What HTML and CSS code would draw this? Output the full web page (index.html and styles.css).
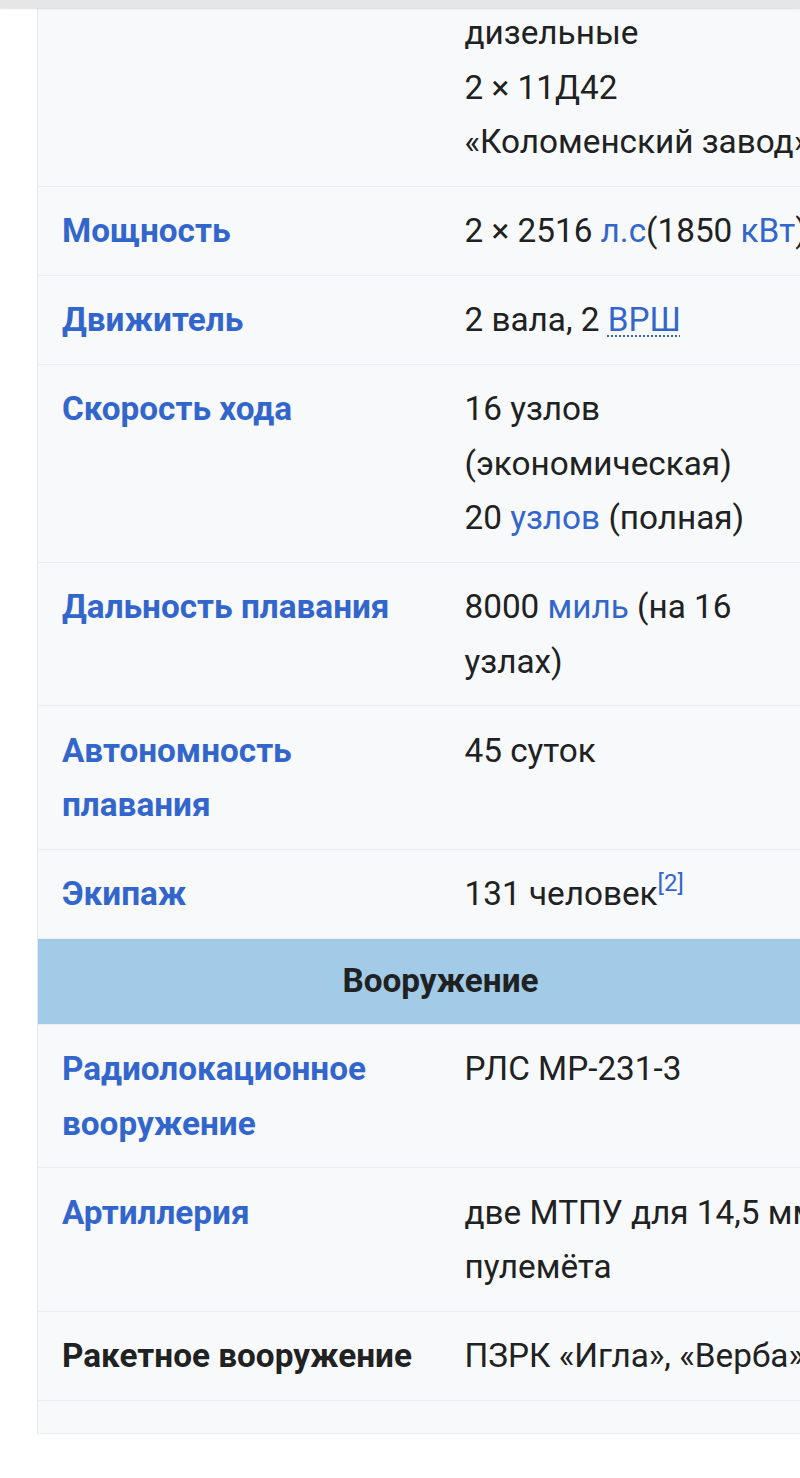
FILE: index.html
```html
<!DOCTYPE html>
<html lang="ru">
<head>
<meta charset="utf-8">
<title>Infobox</title>
<link rel="stylesheet" href="styles.css">
</head>
<body>
<div class="topbar"></div>
<div class="page">
  <table class="infobox">
    <tbody>
      <tr class="first">
        <th class="label"></th>
        <td class="value">дизельные<br>2 × 11Д42<br>«Коломенский завод»</td>
      </tr>
      <tr>
        <th class="label"><a class="link">Мощность</a></th>
        <td class="value">2 × 2516 <a class="link">л.с</a>(1850 <a class="link">кВт</a>)</td>
      </tr>
      <tr>
        <th class="label"><a class="link">Движитель</a></th>
        <td class="value">2 вала, 2 <abbr class="abbr">ВРШ</abbr></td>
      </tr>
      <tr>
        <th class="label"><a class="link">Скорость хода</a></th>
        <td class="value">16 узлов<br>(экономическая)<br>20 <a class="link">узлов</a> (полная)</td>
      </tr>
      <tr>
        <th class="label"><a class="link">Дальность плавания</a></th>
        <td class="value">8000 <a class="link">миль</a> (на 16<br>узлах)</td>
      </tr>
      <tr>
        <th class="label"><a class="link">Автономность<br>плавания</a></th>
        <td class="value">45 суток</td>
      </tr>
      <tr>
        <th class="label"><a class="link">Экипаж</a></th>
        <td class="value">131 человек<sup class="ref">[2]</sup></td>
      </tr>
      <tr class="section">
        <th colspan="2" class="section-title">Вооружение</th>
      </tr>
      <tr>
        <th class="label"><a class="link">Радиолокационное<br>вооружение</a></th>
        <td class="value">РЛС МР-231-3</td>
      </tr>
      <tr>
        <th class="label"><a class="link">Артиллерия</a></th>
        <td class="value">две МТПУ для 14,5 мм<br>пулемёта</td>
      </tr>
      <tr>
        <th class="label plain">Ракетное вооружение</th>
        <td class="value">ПЗРК «Игла», «Верба»</td>
      </tr>
      <tr class="empty">
        <td colspan="2"></td>
      </tr>
    </tbody>
  </table>
</div>
</body>
</html>
```

FILE: styles.css
```css
html, body {
  margin: 0;
  padding: 0;
  background: #ffffff;
  overflow-x: hidden;
}

body {
  font-family: Roboto, "Noto Sans", "Liberation Sans", sans-serif;
  color: #202122;
  font-size: 33.3px;
  line-height: 54.5px;
}

.topbar {
  position: fixed;
  top: 0;
  left: 0;
  right: 0;
  height: 8px;
  background: #e6e6e7;
  box-shadow: 0 1px 2px rgba(0, 0, 0, 0.12);
  z-index: 2;
}

.page {
  padding-left: 37px;
  padding-bottom: 44px;
}

.infobox {
  width: 806px;
  border-collapse: collapse;
  background: #f8f9fa;
  border-left: 1px solid #e6e8eb;
  border-bottom: 1px solid #e6e8eb;
  table-layout: fixed;
}

.infobox tr {
  border-bottom: 1px solid #eaecf0;
}

.label,
.value {
  vertical-align: top;
  text-align: left;
  padding: 17.5px 0 16px 24px;
  white-space: nowrap;
  width: 50%;
}

.label {
  font-weight: 700;
}

.first .label,
.first .value {
  padding-top: 6px;
}

.link {
  color: #3366cc;
  text-decoration: none;
}

.label.plain {
  color: #202122;
}

.abbr {
  color: #3366cc;
  text-decoration-line: underline;
  text-decoration-style: dotted;
  text-decoration-thickness: 2px;
  text-underline-offset: 4px;
  text-decoration-color: #3366cc;
}

.ref {
  color: #3366cc;
  font-size: 24px;
  line-height: 0;
  vertical-align: 0;
  position: relative;
  top: -14px;
}

.section-title {
  background: #a2cbe7;
  text-align: center;
  font-weight: 700;
  padding: 15.5px 0 15px 0;
  color: #202122;
}

.empty td {
  height: 32px;
  padding: 0;
}
```
